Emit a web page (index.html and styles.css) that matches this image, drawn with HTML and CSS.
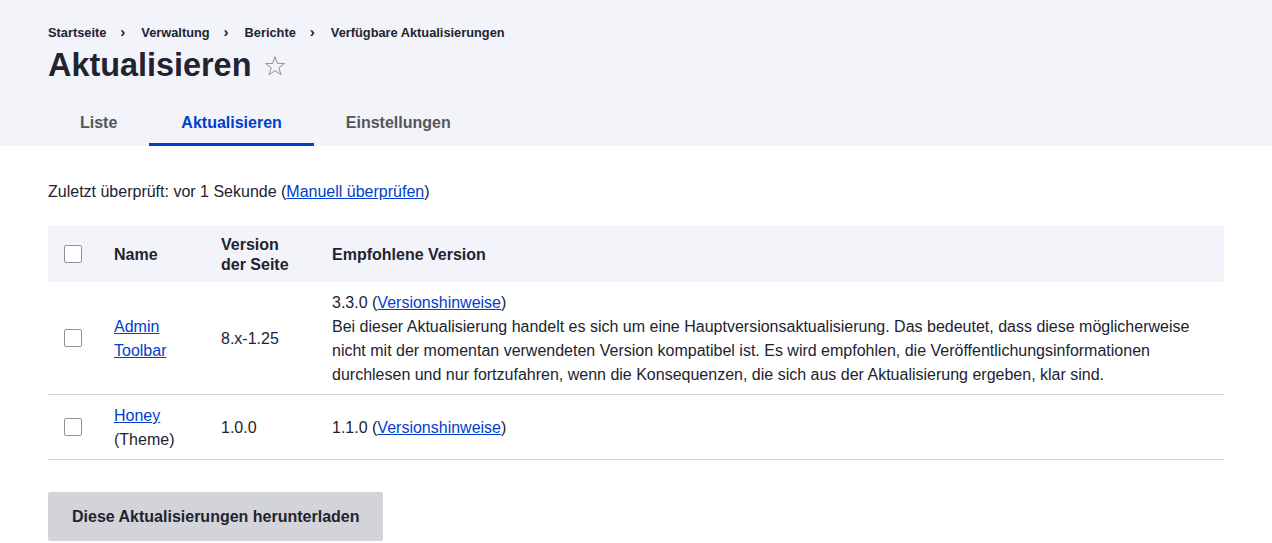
FILE: index.html
```html
<!DOCTYPE html>
<html lang="de">
<head>
<meta charset="utf-8">
<title>Aktualisieren</title>
<link rel="stylesheet" href="styles.css">
</head>
<body>
<header class="page-header">
  <nav class="breadcrumb">
    <a href="#">Startseite</a><span class="sep">›</span>
    <a href="#">Verwaltung</a><span class="sep">›</span>
    <a href="#">Berichte</a><span class="sep">›</span>
    <a href="#">Verfügbare Aktualisierungen</a>
  </nav>
  <div class="title-row">
    <h1 class="title">Aktualisieren</h1>
    <svg class="star" width="24" height="24" viewBox="0 0 24 24"><path d="M12 2.6 L14.3 9.4 L21.5 9.5 L15.8 13.8 L17.9 20.7 L12 16.6 L6.1 20.7 L8.2 13.8 L2.5 9.5 L9.7 9.4 Z" fill="none" stroke="#8e929c" stroke-width="1" stroke-linejoin="miter"/></svg>
  </div>
  <nav class="tabs">
    <a class="tab" href="#">Liste</a>
    <a class="tab active" href="#">Aktualisieren</a>
    <a class="tab" href="#">Einstellungen</a>
  </nav>
</header>
<main class="content">
  <p class="checked">Zuletzt überprüft: vor 1 Sekunde (<a href="#">Manuell überprüfen</a>)</p>
  <table class="updates">
    <thead>
      <tr>
        <th class="c-check"><span class="checkbox"></span></th>
        <th class="c-name">Name</th>
        <th class="c-ver">Version<br>der Seite</th>
        <th class="c-rec">Empfohlene Version</th>
      </tr>
    </thead>
    <tbody>
      <tr>
        <td class="c-check"><span class="checkbox"></span></td>
        <td class="c-name"><a href="#">Admin<br>Toolbar</a></td>
        <td class="c-ver">8.x-1.25</td>
        <td class="c-rec">3.3.0 (<a href="#">Versionshinweise</a>)<br>Bei dieser Aktualisierung handelt es sich um eine Hauptversionsaktualisierung. Das bedeutet, dass diese möglicherweise nicht mit der momentan verwendeten Version kompatibel ist. Es wird empfohlen, die Veröffentlichungsinformationen durchlesen und nur fortzufahren, wenn die Konsequenzen, die sich aus der Aktualisierung ergeben, klar sind.</td>
      </tr>
      <tr>
        <td class="c-check"><span class="checkbox"></span></td>
        <td class="c-name"><a href="#">Honey</a><br>(Theme)</td>
        <td class="c-ver">1.0.0</td>
        <td class="c-rec">1.1.0 (<a href="#">Versionshinweise</a>)</td>
      </tr>
    </tbody>
  </table>
  <button class="btn" type="button">Diese Aktualisierungen herunterladen</button>
</main>
</body>
</html>
```
FILE: styles.css
```css
* { box-sizing: border-box; }
html, body { margin: 0; padding: 0; }
body {
  font-family: "Liberation Sans", Arial, sans-serif;
  color: #222330;
  background: #fff;
  font-size: 16px;
  line-height: 24px;
}
a { color: #003ecc; }
.page-header {
  background: #f3f4f9;
  padding: 24px 48px 0;
}
.breadcrumb {
  display: flex;
  align-items: center;
  font-size: 12.8px;
  font-weight: 700;
  line-height: 16px;
  padding-top: 1px;
}
.breadcrumb a { color: #222330; text-decoration: none; }
.breadcrumb .sep {
  font-size: 15px;
  padding: 0 16px 0 14px;
  position: relative;
  top: -1px;
}
.title-row {
  display: flex;
  align-items: center;
  margin-top: 3px;
  height: 42px;
}
.title {
  margin: 0;
  font-size: 32.4px;
  line-height: 40px;
  font-weight: 700;
}
.star { margin-left: 12px; margin-top: 1px; }
.tabs {
  display: flex;
  margin-top: 12px;
}
.tab {
  display: block;
  padding: 13px 32px 11px;
  font-size: 16px;
  line-height: 24px;
  font-weight: 700;
  color: #55565b;
  text-decoration: none;
  border-bottom: 3px solid transparent;
  height: 48px;
}
.tab.active {
  color: #003ecc;
  border-bottom-color: #003ecc;
}
.content { padding: 34px 48px 0; }
.checked { margin: 0 0 22px; }
.updates {
  width: 100%;
  border-collapse: collapse;
}
.updates th {
  background: #f3f4f9;
  text-align: left;
  font-weight: 700;
  line-height: 20px;
  padding: 9px 16px 7px;
  height: 56px;
}
.updates td {
  padding: 9px 16px 7px;
  vertical-align: middle;
  border-bottom: 1px solid #d3d4d9;
}
.c-check { width: 50px; }
.c-name { width: 107px; }
.c-ver { width: 111px; }
.checkbox {
  display: block;
  width: 18px;
  height: 18px;
  margin: -1px 0 1px;
  border: 1px solid #8e929c;
  border-radius: 2px;
  background: #fff;
}
.btn {
  display: block;
  margin-top: 32px;
  font-family: inherit;
  font-size: 16px;
  line-height: 16px;
  font-weight: 700;
  color: #222330;
  background: #d3d4d9;
  border: 1px solid #d3d4d9;
  border-radius: 2px;
  padding: 15px 23px;
  height: 49px;
  white-space: nowrap;
}
```
